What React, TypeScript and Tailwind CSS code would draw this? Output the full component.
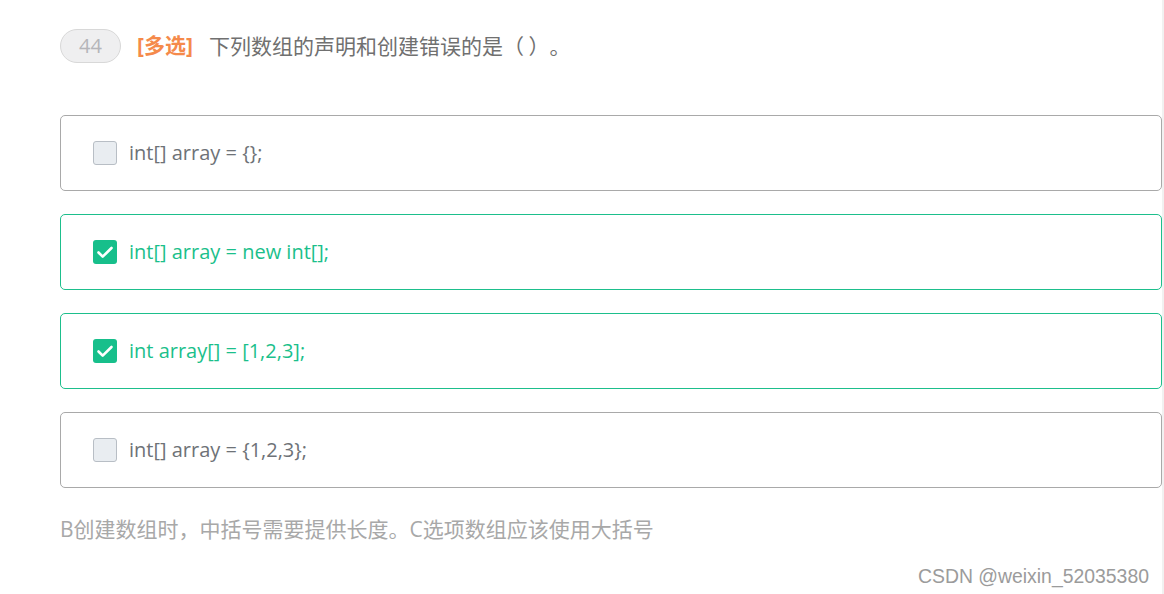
import React from 'react';

const options = [
  { id: 'A', text: 'int[] array = {};', checked: false },
  { id: 'B', text: 'int[] array = new int[];', checked: true },
  { id: 'C', text: 'int array[] = [1,2,3];', checked: true },
  { id: 'D', text: 'int[] array = {1,2,3};', checked: false },
];

const font = { fontFamily: '"Open Sans", "Noto Sans CJK SC", sans-serif' };
const cjk = { fontFamily: '"Noto Sans CJK SC", sans-serif' };

const App = () => {
  return (
    <div className="relative w-[1164px] h-[594px] bg-white overflow-hidden" style={font}>
      <div className="absolute right-0 top-0 h-full w-[2px] bg-[#f1f1f1]" />
      <div className="pl-[60px] pr-[2px] pt-[29px]">
        <div className="flex items-center h-[34px]">
          <div className="w-[61px] h-[34px] rounded-full bg-[#efeff0] border border-[#d8d8d8] flex items-center justify-center text-[20px] text-[#b5b5b9]">
            44
          </div>
          <span className="ml-[16px] text-[21px] font-bold text-[#f58a4b]">[多选]</span>
          <span
            className="ml-[16px] text-[21px] text-[#707070] [text-spacing-trim:space-all] [font-feature-settings:'halt'_0,'chws'_0]"
            style={cjk}
          >
            下列数组的声明和创建错误的是（ ）。
          </span>
        </div>

        <div className="mt-[52px] flex flex-col gap-[23px]">
          {options.map((o) => (
            <div
              key={o.id}
              className={`h-[76px] rounded-[5px] border flex items-center pl-[32px] ${
                o.checked ? 'border-[#1dbf8c]' : 'border-[#a9a9a9]'
              }`}
            >
              {o.checked ? (
                <div className="w-[24px] h-[24px] rounded-[3px] bg-[#17bf8b] flex items-center justify-center">
                  <svg width="24" height="24" viewBox="0 0 24 24" fill="none">
                    <path d="M5.5 12.5l4.2 4.2L18.5 8" stroke="white" strokeWidth="2.6" strokeLinecap="round" strokeLinejoin="round" />
                  </svg>
                </div>
              ) : (
                <div className="w-[24px] h-[24px] rounded-[3px] bg-[#e9edf1] border border-[#b8bec5]" />
              )}
              <span className={`ml-[12px] text-[20px] ${o.checked ? 'text-[#1bbf8b]' : 'text-[#6e7277]'}`}>
                {o.text}
              </span>
            </div>
          ))}
        </div>

        <div className="mt-[26px] text-[21px] text-[#a8a8a8] leading-[30px]">
          B创建数组时，中括号需要提供长度。C选项数组应该使用大括号
        </div>
      </div>
      <div
        className="absolute left-[918px] top-[562px] text-[19.4px] text-[#9b9b9b]"
        style={{ fontFamily: '"Liberation Sans", sans-serif', textShadow: '0 0 1px #fff' }}
      >
        CSDN @weixin_52035380
      </div>
    </div>
  );
};

export default App;
